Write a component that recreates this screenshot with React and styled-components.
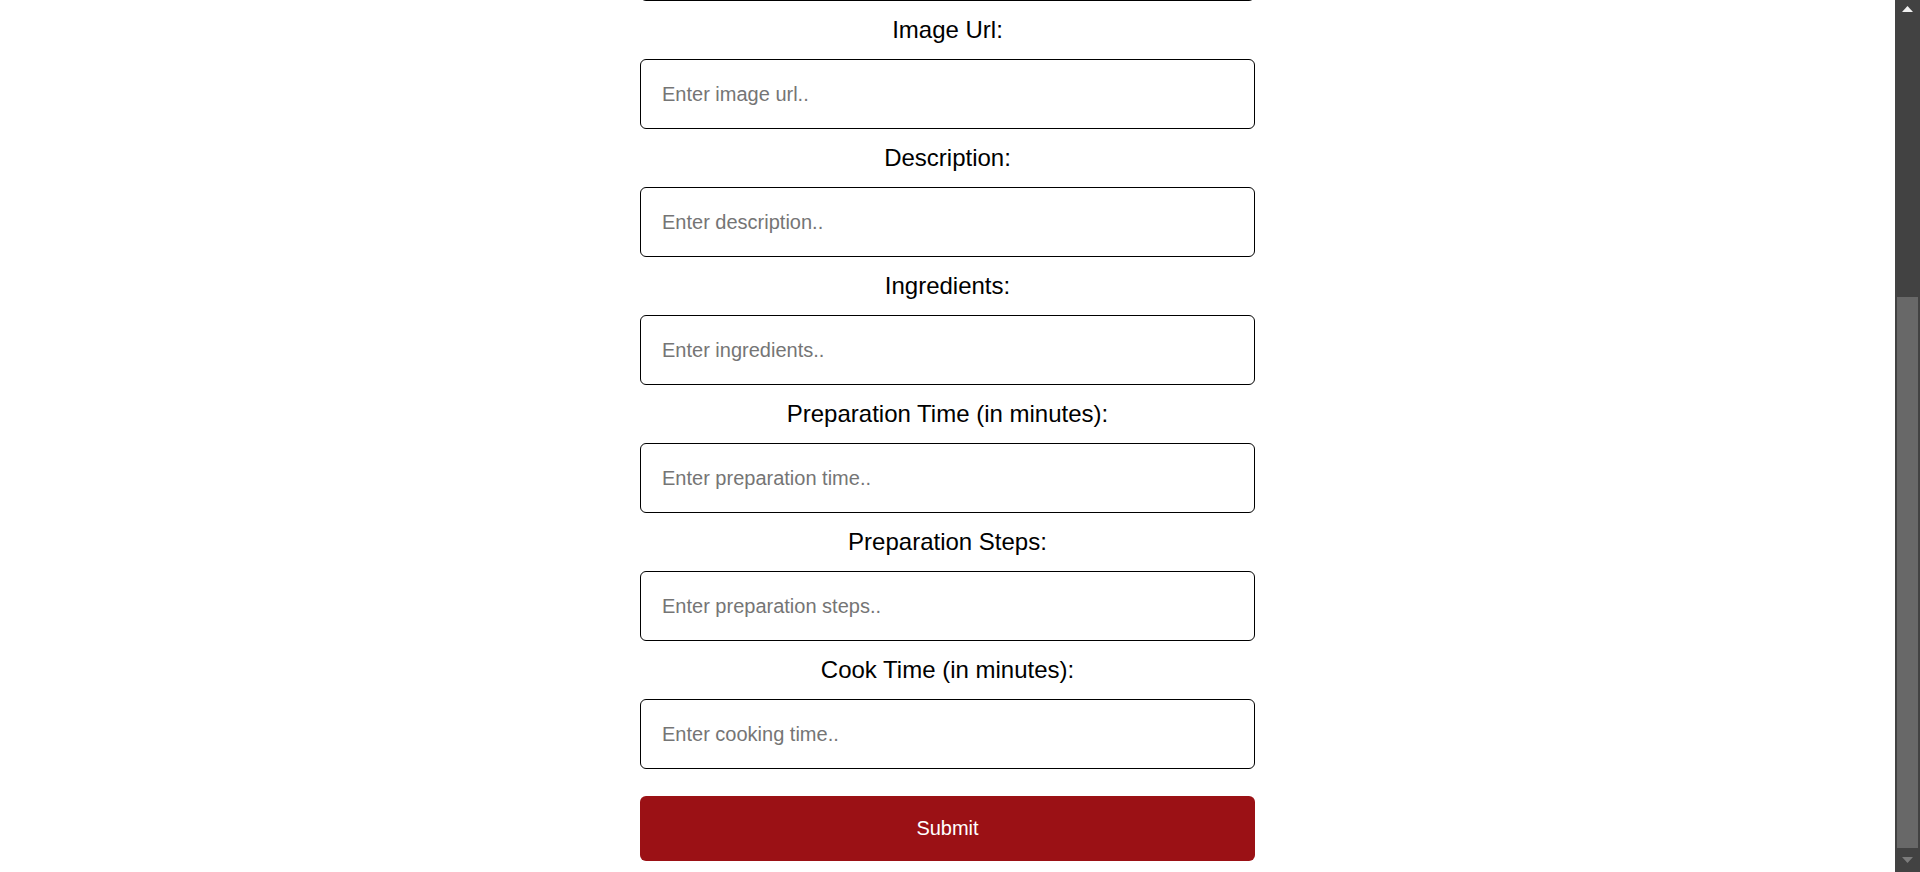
import React from "react";
import styled, { createGlobalStyle } from "styled-components";

const GlobalStyle = createGlobalStyle`
  html, body {
    margin: 0;
    padding: 0;
    height: 100%;
    overflow: hidden;
    background: #ffffff;
  }
  body {
    font-family: "Liberation Sans", Arial, sans-serif;
  }
  * { box-sizing: border-box; }
`;

const Page = styled.div`
  display: flex;
  width: 100vw;
  height: 100vh;
`;

const Main = styled.main`
  flex: 1;
  display: flex;
  flex-direction: column;
  justify-content: flex-end;
  align-items: center;
  overflow: hidden;
  padding-bottom: 11px;
`;

const Form = styled.form`
  width: 615px;
  display: flex;
  flex-direction: column;
`;

const Label = styled.label`
  display: block;
  text-align: center;
  font-size: 24px;
  line-height: 28px;
  margin: 15px 0;
  color: #000;
`;

const Input = styled.input`
  width: 100%;
  height: 70px;
  padding: 0 21px;
  border: 1px solid #000;
  border-radius: 6px;
  font-family: "Liberation Sans", Arial, sans-serif;
  font-size: 20px;
  color: #000;
  background: #fff;
  outline: none;
  &::placeholder {
    color: #757575;
  }
`;

const SubmitButton = styled.button`
  margin-top: 27px;
  height: 65px;
  width: 100%;
  border: none;
  border-radius: 6px;
  background: #9b1115;
  color: #fff;
  font-family: "Liberation Sans", Arial, sans-serif;
  font-size: 20px;
  cursor: pointer;
`;

const ScrollRail = styled.div`
  width: 25px;
  height: 100%;
  background: #424242;
  display: flex;
  flex-direction: column;
`;

const ArrowButton = styled.div`
  height: ${(p) => p.$h}px;
  display: flex;
  align-items: center;
  justify-content: center;
  flex-shrink: 0;
`;

const Track = styled.div`
  flex: 1;
  display: flex;
  flex-direction: column;
  justify-content: flex-end;
  padding: 0 2px;
`;

const Thumb = styled.div`
  height: 551px;
  background: #686868;
`;

const fields = [
  { label: "Recipe Name:", placeholder: "Enter recipe name.." },
  { label: "Image Url:", placeholder: "Enter image url.." },
  { label: "Description:", placeholder: "Enter description.." },
  { label: "Ingredients:", placeholder: "Enter ingredients.." },
  { label: "Preparation Time (in minutes):", placeholder: "Enter preparation time.." },
  { label: "Preparation Steps:", placeholder: "Enter preparation steps.." },
  { label: "Cook Time (in minutes):", placeholder: "Enter cooking time.." },
];

export default function App() {
  return (
    <>
      <GlobalStyle />
      <Page>
        <Main>
          <Form onSubmit={(e) => e.preventDefault()}>
            {fields.map((f, i) => (
              <React.Fragment key={f.label}>
                <Label htmlFor={`field-${i}`}>{f.label}</Label>
                <Input id={`field-${i}`} type="text" placeholder={f.placeholder} />
              </React.Fragment>
            ))}
            <SubmitButton type="submit">Submit</SubmitButton>
          </Form>
        </Main>
        <ScrollRail>
          <ArrowButton $h={17}>
            <svg width="11" height="6" viewBox="0 0 11 6">
              <polygon points="5.5,0 11,6 0,6" fill="#f1f1f1" />
            </svg>
          </ArrowButton>
          <Track>
            <Thumb />
          </Track>
          <ArrowButton $h={24}>
            <svg width="11" height="6" viewBox="0 0 11 6">
              <polygon points="0,0 11,0 5.5,6" fill="#7b7b7b" />
            </svg>
          </ArrowButton>
        </ScrollRail>
      </Page>
    </>
  );
}
